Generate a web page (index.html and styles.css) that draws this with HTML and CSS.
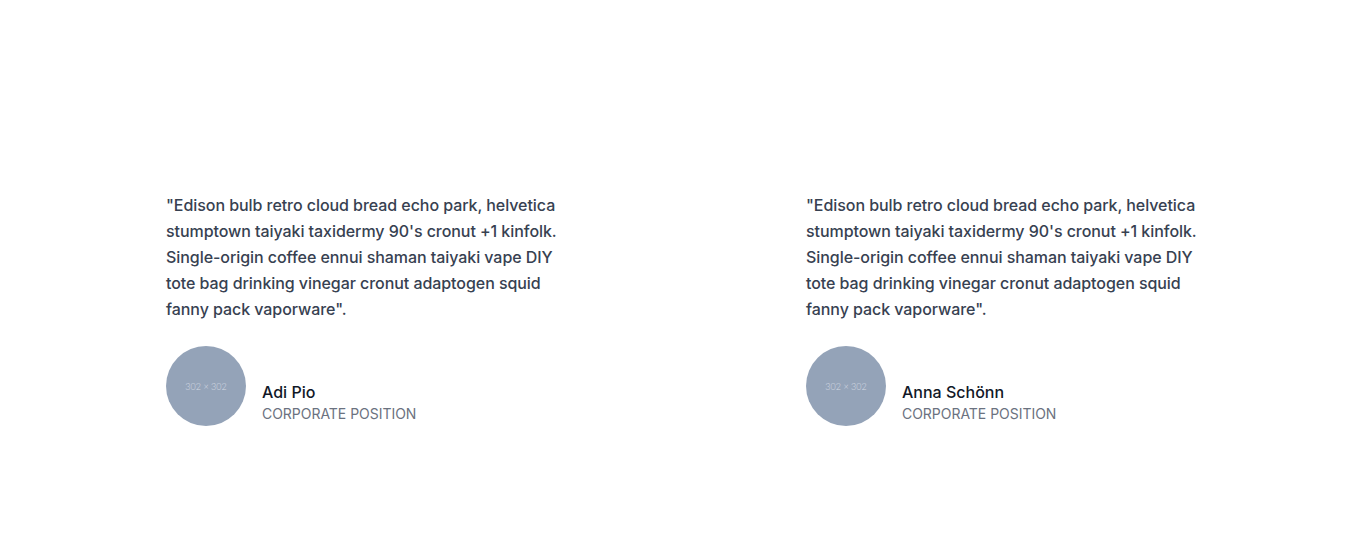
FILE: index.html
```html
<!DOCTYPE html>
<html lang="en">
<head>
<meta charset="utf-8">
<title>Testimonials</title>
<link rel="stylesheet" href="styles.css">
</head>
<body>
<section class="testimonials">
  <div class="grid">
    <figure class="card">
      <blockquote class="quote">"Edison bulb retro cloud bread echo park, helvetica stumptown taiyaki taxidermy 90's cronut +1 kinfolk. Single-origin coffee ennui shaman taiyaki vape DIY tote bag drinking vinegar cronut adaptogen squid fanny pack vaporware".</blockquote>
      <figcaption class="author">
        <div class="avatar"><span>302 × 302</span></div>
        <div class="meta">
          <div class="name">Adi Pio</div>
          <div class="role">CORPORATE POSITION</div>
        </div>
      </figcaption>
    </figure>
    <figure class="card">
      <blockquote class="quote">"Edison bulb retro cloud bread echo park, helvetica stumptown taiyaki taxidermy 90's cronut +1 kinfolk. Single-origin coffee ennui shaman taiyaki vape DIY tote bag drinking vinegar cronut adaptogen squid fanny pack vaporware".</blockquote>
      <figcaption class="author">
        <div class="avatar"><span>302 × 302</span></div>
        <div class="meta">
          <div class="name">Anna Schönn</div>
          <div class="role">CORPORATE POSITION</div>
        </div>
      </figcaption>
    </figure>
  </div>
</section>
</body>
</html>
```

FILE: styles.css
```css
* { box-sizing: border-box; }
html, body {
  margin: 0;
  padding: 0;
  background: #ffffff;
  font-family: Inter, "Noto Sans", sans-serif;
}
.testimonials {
  padding: 192px 0 100px 166px;
}
.grid {
  display: flex;
  gap: 240px;
}
.card {
  margin: 0;
  width: 400px;
  display: flex;
  flex-direction: column;
}
.quote {
  margin: 0;
  font-size: 16px;
  line-height: 26px;
  font-weight: 500;
  letter-spacing: -0.06px;
  color: #374151;
}
.author {
  margin-top: 24px;
  display: flex;
  align-items: flex-end;
  gap: 16px;
}
.avatar {
  width: 80px;
  height: 80px;
  border-radius: 50%;
  background: #94a3b8;
  display: flex;
  align-items: center;
  justify-content: center;
  flex-shrink: 0;
}
.avatar span {
  font-family: Lato, "Open Sans", sans-serif;
  font-size: 9px;
  font-weight: 300;
  color: #d4dbe4;
}
.meta {
  display: flex;
  flex-direction: column;
  padding-bottom: 2px;
}
.name {
  font-size: 16px;
  line-height: 24px;
  font-weight: 500;
  color: #111827;
}
.role {
  font-size: 14px;
  line-height: 20px;
  letter-spacing: -0.03px;
  color: #6b7280;
}
```
